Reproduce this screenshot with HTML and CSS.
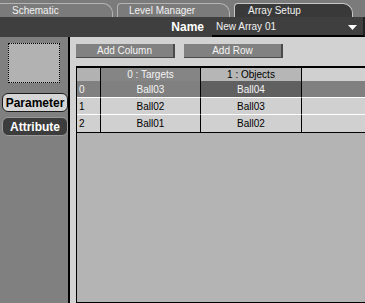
FILE: index.html
```html
<!doctype html>
<html lang="en">
<head>
    <meta charset="UTF-8">
    <title>Array Setup</title>
    <link rel="stylesheet" href="styles.css">
</head>
<body>
<div class="window">
    <ul class="tabs">
        <li class="tab">Schematic</li>
        <li class="tab">Level Manager</li>
        <li class="tab tab-on">Array Setup</li>
    </ul>
    <div class="name-bar">
        <span class="name-label">Name</span>
        <div class="name-select">
            <span>New Array 01</span>
            <svg class="caret" width="9" height="5" viewBox="0 0 9 5"><path d="M0 0H9L4.5 5Z" fill="#fff"/></svg>
        </div>
    </div>
    <div class="main">
        <div class="side">
            <div class="preview"></div>
            <div class="side-btn side-btn-light">Parameter</div>
            <div class="side-btn side-btn-dark">Attribute</div>
        </div>
        <div class="content">
            <div class="toolbar">
                <div class="tool-btn">Add Column</div>
                <div class="tool-btn">Add Row</div>
            </div>
            <div class="grid-area">
                <div class="grid">
                    <div class="cell c-idx-head"></div>
                    <div class="cell c-head-dark">0 : Targets</div>
                    <div class="cell c-head-light">1 : Objects</div>
                    <div class="cell c-head-empty"></div>

                    <div class="cell idx sel">0</div>
                    <div class="cell sel">Ball03</div>
                    <div class="cell sel-dark">Ball04</div>
                    <div class="cell sel"></div>

                    <div class="cell idx">1</div>
                    <div class="cell">Ball02</div>
                    <div class="cell">Ball03</div>
                    <div class="cell"></div>

                    <div class="cell idx">2</div>
                    <div class="cell">Ball01</div>
                    <div class="cell">Ball02</div>
                    <div class="cell"></div>
                </div>
            </div>
        </div>
    </div>
</div>
</body>
</html>
```

FILE: styles.css
```css
body, ul, li {
    margin: 0;
    padding: 0;
}
ul { list-style: none; }

body {
    font: 10px/1 "Liberation Sans", Arial, sans-serif;
    background: #d2d2d2;
}

.window {
    width: 365px;
    height: 303px;
    display: flex;
    flex-direction: column;
    overflow: hidden;
}

/* tabs */
.tabs {
    height: 17px;
    background: #7b7b7b;
    display: flex;
    align-items: flex-end;
    box-sizing: border-box;
}
.tab {
    width: 113px;
    height: 14px;
    margin-right: 4px;
    box-sizing: border-box;
    border: 1px solid #b4b4b4;
    border-bottom: none;
    border-radius: 4px 10px 0 0;
    color: #f2f2f2;
    padding: 2px 0 0 11px;
}
.tab:first-child {
    border-left: none;
    border-radius: 0 10px 0 0;
    padding-left: 12px;
}
.tab-on {
    width: 119px;
    background: #393939;
    border-color: #c8c8c8;
    padding-left: 13px;
}

/* name bar */
.name-bar {
    height: 20px;
    background: #3f3f3f;
    display: flex;
    justify-content: flex-end;
}
.name-label {
    color: #fff;
    font-weight: bold;
    font-size: 12px;
    padding-top: 4px;
    margin-right: 8px;
}
.name-select {
    width: 153px;
    box-sizing: border-box;
    border-bottom: 2px solid #000;
    border-right: 2px solid #222;
    color: #f2f2f2;
    display: flex;
    justify-content: space-between;
    align-items: center;
    padding: 2px 6px 0 4px;
}

/* main */
.main {
    flex: 1;
    display: flex;
}
.side {
    width: 68px;
    background: #808080;
    border-right: 2px solid #000;
    display: flex;
    flex-direction: column;
    align-items: center;
}
.preview {
    width: 52px;
    height: 40px;
    box-sizing: border-box;
    margin-top: 6px;
    border: 1px dotted #000;
    background: #b2b2b2;
}
.side-btn {
    width: 66px;
    height: 19px;
    box-sizing: border-box;
    border-radius: 6px;
    font-weight: bold;
    font-size: 12px;
    text-align: center;
    padding-top: 3px;
    margin-left: 2px;
}
.side-btn-light {
    margin-top: 10px;
    background: #d6d6d6;
    border: 1px solid #1c1c1c;
    color: #000;
}
.side-btn-dark {
    margin-top: 5px;
    background: #3c3c3c;
    border: 1px solid #9a9a9a;
    color: #fff;
}

.content {
    flex: 1;
    display: flex;
    flex-direction: column;
    padding-left: 6px;
}
.toolbar {
    display: flex;
    gap: 9px;
    padding: 7px 0 8px;
}
.tool-btn {
    width: 97px;
    height: 11px;
    background: #818181;
    color: #f4f4f4;
    text-align: center;
    padding-top: 2px;
    border-right: 2px solid #4a4a4a;
    border-bottom: 1px solid #4a4a4a;
}

.grid-area {
    flex: 1;
    background: #b4b4b4;
    border-top: 2px solid #000;
    border-left: 1px solid #000;
    border-bottom: 1px solid #000;
}
.grid {
    display: grid;
    grid-template-columns: 24px 100px 101px 1fr;
    grid-template-rows: 13px 17px 17px 17px;
    background: #000;
    border-bottom: 1px solid #000;
}
.cell {
    background: #d0d0d0;
    color: #000;
    text-align: center;
    border-right: 1px solid #000;
    border-bottom: 1px solid #fff;
    padding-top: 4px;
    box-sizing: border-box;
}
.cell:nth-child(4n) { border-right: none; }
.idx {
    text-align: left;
    padding-left: 2px;
}
.c-idx-head, .c-head-dark, .c-head-light, .c-head-empty {
    border-bottom: none;
    padding-top: 2px;
}
.c-idx-head { background: #b2b2b2; }
.c-head-dark { background: #858585; color: #f4f4f4; }
.c-head-light { background: #b6b6b6; }
.c-head-empty { background: #d0d0d0; }
.sel { background: #808080; color: #f4f4f4; }
.sel-dark { background: #606060; color: #f4f4f4; }
.grid .cell:nth-last-child(-n+4) { border-bottom: none; }
```
